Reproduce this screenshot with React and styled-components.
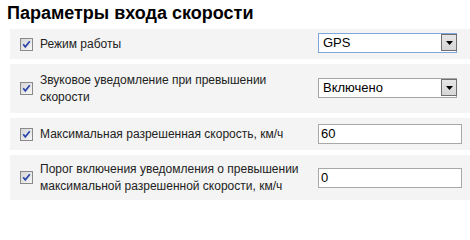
import React from "react";
import styled, { createGlobalStyle } from "styled-components";

const Global = createGlobalStyle`
  html, body { margin: 0; padding: 0; background: #ffffff; }
  body { font-family: "Liberation Sans", Arial, sans-serif; color: #222; overflow: hidden; }
`;

const Page = styled.div`
  width: 470px;
  height: 203px;
  padding-top: 3px;
  box-sizing: border-box;
`;

const Title = styled.h1`
  margin: 0;
  padding-left: 7px;
  font-size: 18px;
  line-height: 21px;
  font-weight: bold;
  color: #000;
`;

const List = styled.div`
  margin: 5px 0 0 10px;
  display: flex;
  flex-direction: column;
  gap: 5px;
`;

const Row = styled.div`
  display: flex;
  align-items: center;
  height: ${(p) => p.$h}px;
  background: #f4f4f4;
  padding-left: 10px;
  box-sizing: border-box;
`;

const Label = styled.div`
  width: 278px;
  margin-left: 7px;
  font-size: 12px;
  line-height: 17px;
  color: #222;
`;

const SelectBox = styled.div`
  width: 139px;
  height: 20px;
  box-sizing: border-box;
  border: 1px solid ${(p) => (p.$focused ? "#7fa6dc" : "#a5a5a5")};
  background: #fff;
  display: flex;
  align-items: center;
  justify-content: space-between;
  margin-bottom: ${(p) => p.$lift}px;
  font-size: 13px;
  color: #000;
`;

const SelectValue = styled.span`
  padding-left: 4px;
  line-height: 18px;
`;

const ArrowButton = styled.span`
  width: 16px;
  height: 17px;
  box-sizing: border-box;
  border: 1px solid #6f6f6f;
  background: linear-gradient(#e6e6e6, #d6d6d6);
  display: flex;
  align-items: center;
  justify-content: center;
  margin-right: -1px;
`;

const TextInput = styled.div`
  width: 144px;
  height: 20px;
  box-sizing: border-box;
  border: 1px solid #a9a9a9;
  background: #fff;
  font-size: 13px;
  line-height: 18px;
  padding-left: 2px;
  color: #000;
`;

function CheckBox() {
  return (
    <svg width="13" height="13" viewBox="0 0 13 13" style={{ flex: "none" }}>
      <defs>
        <linearGradient id="cbg" x1="0" y1="0" x2="1" y2="1">
          <stop offset="0" stopColor="#d4d4d4" />
          <stop offset="1" stopColor="#f8f8f8" />
        </linearGradient>
      </defs>
      <rect x="0.5" y="0.5" width="12" height="12" fill="url(#cbg)" stroke="#8a8a8a" />
      <path d="M3.2 6.3 L5.3 8.8 L9.8 3.3" fill="none" stroke="#2b45a8" strokeWidth="1.7" />
    </svg>
  );
}

function Arrow() {
  return (
    <svg width="7" height="4" viewBox="0 0 7 4">
      <path d="M0 0 H7 L3.5 4 Z" fill="#000" />
    </svg>
  );
}

function Select({ value, focused, lift = 0 }) {
  return (
    <SelectBox $focused={focused} $lift={lift}>
      <SelectValue>{value}</SelectValue>
      <ArrowButton>
        <Arrow />
      </ArrowButton>
    </SelectBox>
  );
}

export default function App() {
  return (
    <Page>
      <Global />
      <Title>Параметры входа скорости</Title>
      <List>
        <Row $h={30}>
          <CheckBox />
          <Label>Режим работы</Label>
          <Select value="GPS" focused lift={3} />
        </Row>
        <Row $h={49}>
          <CheckBox />
          <Label>Звуковое уведомление при превышении скорости</Label>
          <Select value="Включено" lift={2} />
        </Row>
        <Row $h={32}>
          <CheckBox />
          <Label>Максимальная разрешенная скорость, км/ч</Label>
          <TextInput>60</TextInput>
        </Row>
        <Row $h={45}>
          <CheckBox />
          <Label>Порог включения уведомления о превышении максимальной разрешенной скорости, км/ч</Label>
          <TextInput>0</TextInput>
        </Row>
      </List>
    </Page>
  );
}
